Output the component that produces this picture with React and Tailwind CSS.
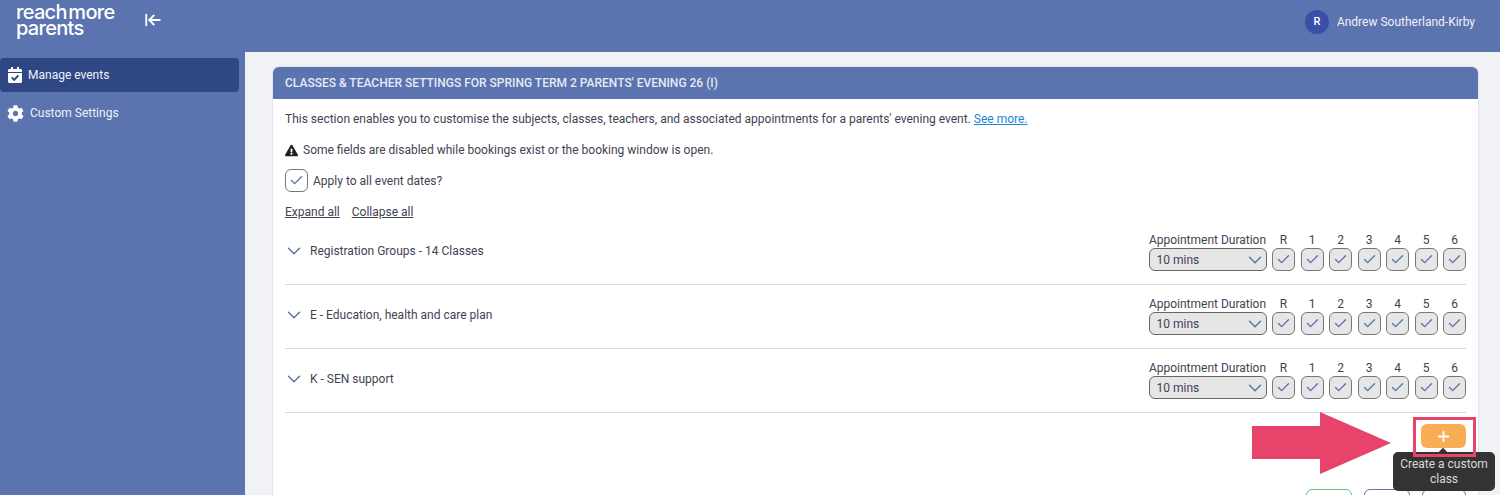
import { ChevronDown, Check, ArrowLeftToLine, Plus } from "lucide-react";
import { FaCalendarCheck, FaCog, FaExclamationTriangle } from "react-icons/fa";

const rows = ["Registration Groups - 14 Classes", "E - Education, health and care plan", "K - SEN support"];
const years = ["R", "1", "2", "3", "4", "5", "6"];

function Row({ title }) {
  return (
    <div className="flex h-[64px] items-center justify-between border-b border-[#d9d9d9] pb-[4px]">
      <div className="flex items-center gap-[5px] text-[12px] text-[#3f4354]">
        <ChevronDown size={22} strokeWidth={1.6} className="-ml-[2px] mt-[1px] text-[#5a72ad]" />
        <span>{title}</span>
      </div>
      <div className="mt-[2px] flex gap-[5.5px]">
        <div className="w-[118px]">
          <div className="whitespace-nowrap text-center text-[12px] leading-[16px] text-[#3f4354]">Appointment Duration</div>
          <div className="flex h-[23px] items-center justify-between rounded-[6px] border border-[#666] bg-[#e6e6e6] pl-[7px] text-[12px] text-[#3f4354]">
            <span>10 mins</span>
            <ChevronDown size={22} strokeWidth={1.6} className="text-[#5a72ad]" />
          </div>
        </div>
        {years.map((y) => (
          <div key={y} className="w-[23px]">
            <div className="text-center text-[12px] leading-[16px] text-[#3f4354]">{y}</div>
            <div className="flex h-[23px] items-center justify-center rounded-[6px] border border-[#777] bg-[#e6e6e6]">
              <Check size={15} strokeWidth={2.2} className="text-[#5a72ad]" />
            </div>
          </div>
        ))}
      </div>
    </div>
  );
}

export default function App() {
  return (
    <div className="relative flex h-[495px] w-[1500px] flex-col overflow-hidden bg-[#f0f2f6] font-['Roboto',sans-serif]">
      {/* top bar */}
      <div className="flex h-[52px] shrink-0 items-center justify-between bg-[#5b73ae] pl-[16px] pr-[25px] text-white">
        <div className="flex items-center gap-[28px]">
          <div className="-mt-[12px] w-[100px] whitespace-nowrap font-['Inter',sans-serif] text-[20px] font-medium leading-[16px] tracking-[-0.7px] [word-spacing:-3px]">
            reach more<br />parents
          </div>
          <ArrowLeftToLine size={18} strokeWidth={2.4} className="-mt-[12px]" />
        </div>
        <div className="-mt-[8px] flex items-center gap-[8px]">
          <div className="flex h-[24px] w-[24px] items-center justify-center rounded-full bg-[#3b4fa8] text-[11px] font-medium">R</div>
          <span className="text-[12px] text-[#eef1f8]">Andrew Southerland-Kirby</span>
        </div>
      </div>

      <div className="flex flex-1">
        {/* sidebar */}
        <div className="w-[245px] shrink-0 bg-[#5b73ae] pr-[6px] pt-[6px] text-[12px] text-[#eef1f8]">
          <div className="flex h-[34px] items-center gap-[5px] rounded-[4px] bg-[#2f4783] pl-[7px]">
            <FaCalendarCheck size={16} className="text-white" />
            <span>Manage events</span>
          </div>
          <div className="mt-[2px] flex h-[38px] items-center gap-[6px] pl-[7px]">
            <FaCog size={17} className="text-white" />
            <span>Custom Settings</span>
          </div>
        </div>

        {/* main */}
        <div className="flex-1 pl-[28px] pr-[22px] pt-[15px]">
          <div className="h-[600px] rounded-t-[6px] bg-white shadow-[0_0_2px_rgba(0,0,0,0.2)]">
            <div className="flex h-[32px] items-center rounded-t-[6px] bg-[#5b73ae] pl-[12px] text-[12px] font-medium text-[#e6eaf3]">
              CLASSES &amp; TEACHER SETTINGS FOR SPRING TERM 2 PARENTS' EVENING 26 (I)
            </div>
            <div className="px-[12px] pt-[12px] text-[12px] text-[#3f4354]">
              <p className="leading-[16px]">
                This section enables you to customise the subjects, classes, teachers, and associated appointments for a parents' evening event.{" "}
                <span className="text-[#1b87d6] underline">See more.</span>
              </p>
              <div className="mt-[15px] flex items-center gap-[5px] leading-[16px]">
                <FaExclamationTriangle size={13} className="text-[#222]" />
                <span>Some fields are disabled while bookings exist or the booking window is open.</span>
              </div>
              <div className="mt-[11px] flex items-center gap-[5px]">
                <div className="flex h-[23px] w-[23px] items-center justify-center rounded-[6px] border border-[#777]">
                  <Check size={15} strokeWidth={2.2} className="text-[#5a72ad]" />
                </div>
                <span>Apply to all event dates?</span>
              </div>
              <div className="mt-[12px] flex gap-[12px] leading-[16px] underline">
                <span>Expand all</span>
                <span>Collapse all</span>
              </div>
              <div className="mt-[1px]">
                {rows.map((r) => (
                  <Row key={r} title={r} />
                ))}
              </div>
              <div className="mt-[11px] flex justify-end">
                <div className="flex h-[24px] w-[45px] items-center justify-center rounded-[6px] bg-[#f9ae55]">
                  <Plus size={17} strokeWidth={2.5} className="text-white" />
                </div>
              </div>
              <div className="mt-[41px] flex justify-end gap-[12px]">
                <div className="h-[30px] w-[46px] rounded-[6px] border border-[#5cc47a]" />
                <div className="h-[30px] w-[46px] rounded-[6px] border border-[#5b73ae]" />
                <div className="h-[30px] w-[44px] rounded-[6px] border border-[#5b73ae]" />
              </div>
            </div>
          </div>
        </div>
      </div>

      {/* annotations */}
      <svg className="absolute left-[1252px] top-[412px]" width="139" height="62" viewBox="0 0 139 62">
        <path d="M0 14H68V0L139 31L68 62V47H0Z" fill="#e8436b" />
      </svg>
      <div className="absolute left-[1440px] top-[449px] h-[6px] w-[6px] rotate-45 bg-[#333]" />
      <div className="absolute left-[1393px] top-[452px] flex h-[39px] w-[102px] items-center justify-center rounded-[5px] bg-[#333] px-[6px] text-center text-[12px] leading-[15px] text-[#d9d9d9]">
        Create a custom class
      </div>
      <div className="absolute left-[1413px] top-[417px] h-[40px] w-[63px] border-[3px] border-[#e8436b]" />
    </div>
  );
}
